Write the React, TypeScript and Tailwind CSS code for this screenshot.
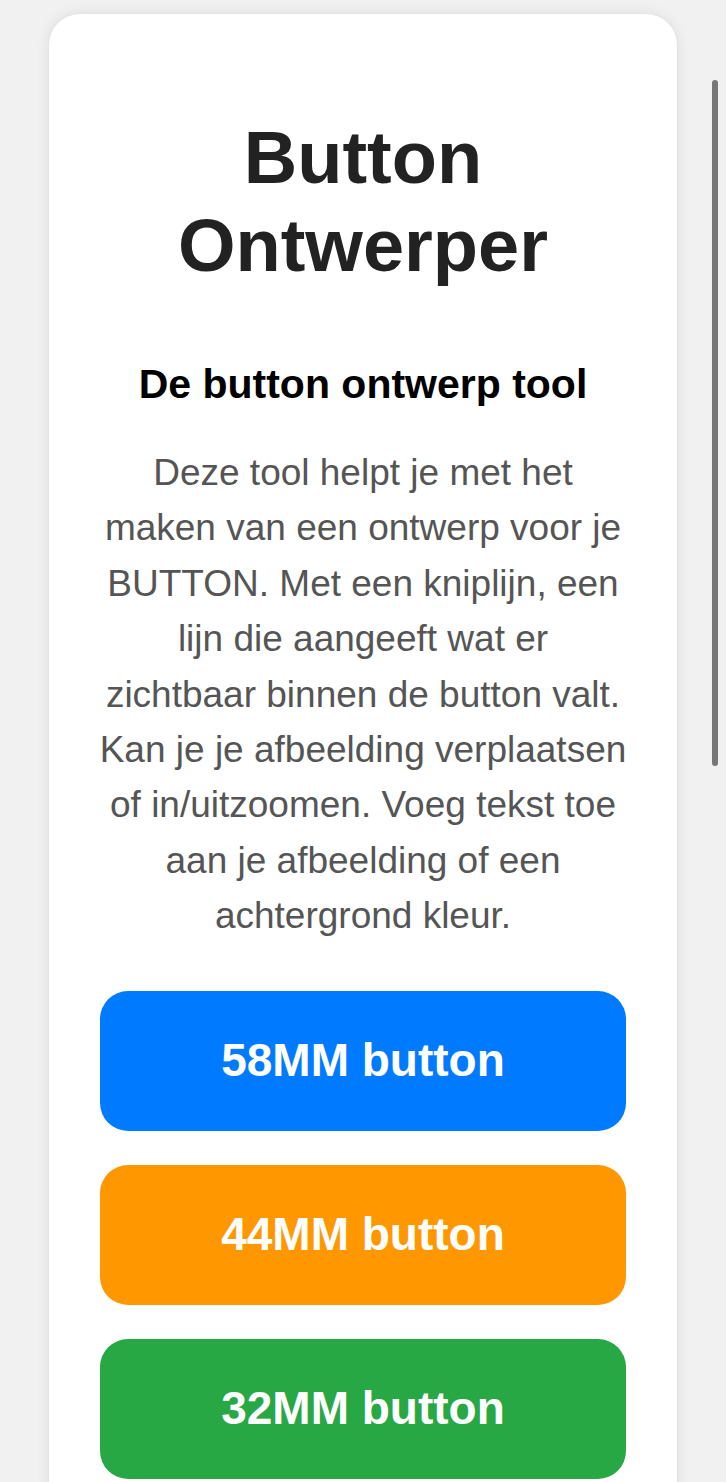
export default function App() {
  const buttons = [
    { label: '58MM button', color: 'bg-[#007bff]' },
    { label: '44MM button', color: 'bg-[#ff9800]' },
    { label: '32MM button', color: 'bg-[#28a745]' },
  ];

  return (
    <div className="relative min-h-[1482px] bg-[#f1f1f1] pt-[13px] px-[48px] font-['Liberation_Sans',Arial,sans-serif]">
      <div className="bg-white rounded-[32px] shadow-[0_0_14px_rgba(0,0,0,0.08)] border border-[#e4e4e4] pt-[100px] px-[51px] pb-[60px] text-center">
        <h1 className="text-[74px] leading-[88px] font-bold text-[#222]">
          Button Ontwerper
        </h1>
        <h2 className="mt-[70px] text-[41px] leading-[48px] font-bold text-black">
          De button ontwerp tool
        </h2>
        <p className="-mx-[1px] mt-[37px] text-[37px] leading-[55.4px] text-[#555]">
          Deze tool helpt je met het maken van een ontwerp voor je BUTTON. Met een kniplijn, een lijn die
          aangeeft wat er zichtbaar binnen de button valt. Kan je je afbeelding verplaatsen of in/uitzoomen.
          Voeg tekst toe aan je afbeelding of een achtergrond kleur.
        </p>
        <div className="mt-[47px] flex flex-col gap-[34px]">
          {buttons.map((b) => (
            <button
              key={b.label}
              className={`${b.color} h-[140px] w-full rounded-[28px] text-white text-[46px] font-bold`}
            >
              {b.label}
            </button>
          ))}
        </div>
      </div>
      <div className="absolute right-[8px] top-[80px] h-[686px] w-[6px] rounded-full bg-[#777]" />
    </div>
  );
}
